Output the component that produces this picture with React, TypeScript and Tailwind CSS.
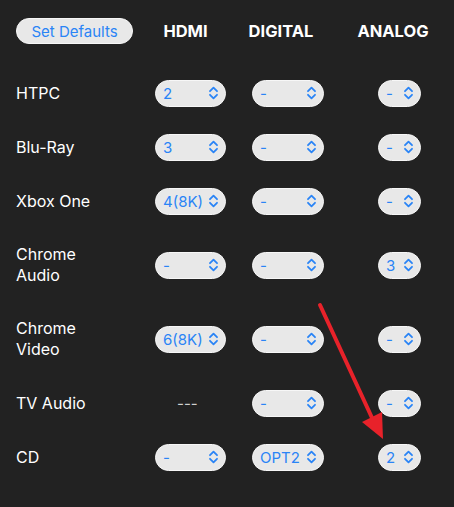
import React from 'react';

type Row = {
  label: string[];
  hdmi: string | null;
  digital: string;
  analog: string;
};

const rows: Row[] = [
  { label: ['HTPC'], hdmi: '2', digital: '-', analog: '-' },
  { label: ['Blu-Ray'], hdmi: '3', digital: '-', analog: '-' },
  { label: ['Xbox One'], hdmi: '4(8K)', digital: '-', analog: '-' },
  { label: ['Chrome', 'Audio'], hdmi: '-', digital: '-', analog: '3' },
  { label: ['Chrome', 'Video'], hdmi: '6(8K)', digital: '-', analog: '-' },
  { label: ['TV Audio'], hdmi: null, digital: '-', analog: '-' },
  { label: ['CD'], hdmi: '-', digital: 'OPT2', analog: '2' },
];

function Chevrons() {
  return (
    <svg width="9" height="14" viewBox="0 0 9 14" fill="none" className="shrink-0">
      <path
        d="M1 5.2 L4.5 1.7 L8 5.2 M1 8.8 L4.5 12.3 L8 8.8"
        stroke="#2a84f6"
        strokeWidth="1.8"
        strokeLinecap="round"
        strokeLinejoin="round"
      />
    </svg>
  );
}

function Picker({ value, width }: { value: string; width: string }) {
  return (
    <div
      className={`flex h-[27px] ${width} shrink-0 items-center justify-between rounded-full border border-[#f7f7f7] bg-[#e8e8e8] pl-[7px] pr-[7px] text-[15px] leading-none text-[#2a84f6]`}
    >
      <span>{value}</span>
      <Chevrons />
    </div>
  );
}

export default function App() {
  return (
    <div
      className="relative h-[507px] w-[454px] overflow-hidden bg-[#222222] text-white"
      style={{ fontFamily: 'Inter, "Liberation Sans", sans-serif' }}
    >
      <header className="flex items-center pl-4 pt-[18px] pb-[22px]">
        <button className="h-[26px] w-[117px] shrink-0 rounded-full border border-[#f7f7f7] bg-[#e8e8e8] text-[15px] leading-none text-[#2a84f6]">
          Set Defaults
        </button>
        <div className="ml-[12px] w-[81px] shrink-0 text-center text-[16.5px] font-bold">HDMI</div>
        <div className="w-[110px] shrink-0 text-center text-[16.5px] font-bold">DIGITAL</div>
        <div className="w-[114px] shrink-0 text-center text-[16.5px] font-bold">ANALOG</div>
      </header>

      <div className="flex flex-col">
        {rows.map((row) => (
          <div
            className={`flex items-center px-4 ${row.label.length > 1 ? 'h-[74px]' : 'h-[54px]'}`}
            key={row.label.join(' ')}
          >
            <div className="w-[139px] shrink-0 text-[16px] leading-[21px]">
              {row.label.map((line) => (
                <div key={line}>{line}</div>
              ))}
            </div>
            <div className="w-[97px] shrink-0">
              {row.hdmi === null ? (
                <span className="pl-[22px] text-[15px] text-[#d0d0d0]">---</span>
              ) : (
                <Picker value={row.hdmi} width="w-[71px]" />
              )}
            </div>
            <div className="w-[126px] shrink-0">
              <Picker value={row.digital} width="w-[72px]" />
            </div>
            <Picker value={row.analog} width="w-[43px]" />
          </div>
        ))}
      </div>

      {/* annotation arrow */}
      <svg className="pointer-events-none absolute left-0 top-0" width="454" height="507">
        <line x1="320" y1="305" x2="373" y2="420" stroke="#e8222a" strokeWidth="4" strokeLinecap="round" />
        <polygon points="362,422 382,412 383,439" fill="#e8222a" />
      </svg>
    </div>
  );
}
